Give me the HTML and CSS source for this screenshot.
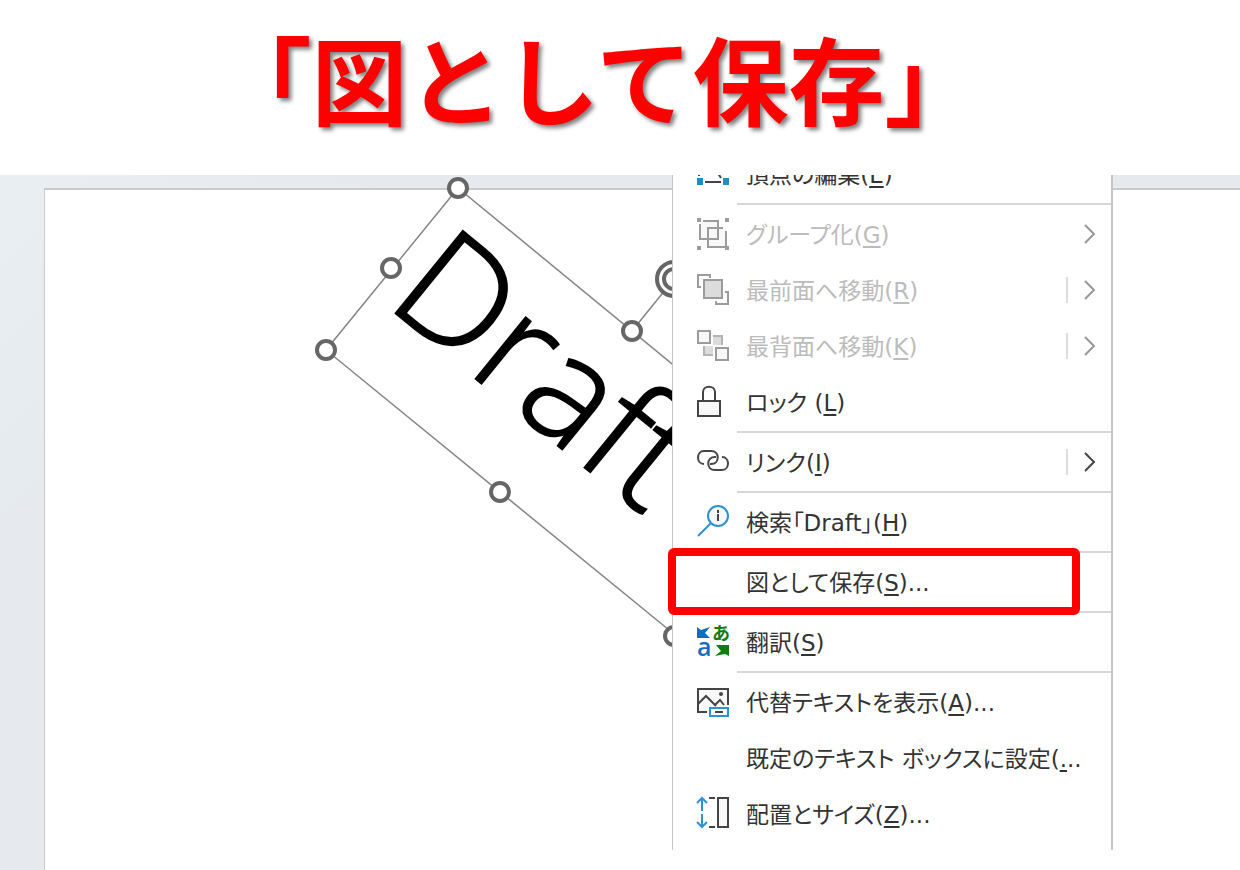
FILE: index.html
```
<!DOCTYPE html>
<html lang="ja">
<head>
    <meta charset="UTF-8">
    <meta name="viewport" content="width=device-width, initial-scale=1.0">
    <title>図として保存</title>
    <link rel="stylesheet" href="styles.css">
</head>
<body>

    <h1>「図として保存」</h1>

    <main class="canvas">
        <div class="page"></div>

        <!-- Selected text box -->
        <svg class="drawing" width="1240" height="695" viewBox="0 175 1240 695">
            <path class="frame" d="M458 188 L326 350 L674 634 L806 474 Z M632 331 L674 279"/>
            <text class="draft" transform="translate(384 304) rotate(39.2)">Draft</text>
            <g class="handle">
                <circle cx="458" cy="188" r="9"/>
                <circle cx="391" cy="268" r="9"/>
                <circle cx="326" cy="350" r="9"/>
                <circle cx="632" cy="331" r="9"/>
                <circle cx="500" cy="492" r="9"/>
                <circle cx="674" cy="636" r="9"/>
                <circle cx="674" cy="279" r="17"/>
                <circle cx="674" cy="279" r="10"/>
            </g>
        </svg>

        <div class="menu">
            <button type="button" class="item first">
                <svg class="icon" viewBox="0 0 32 32">
                    <path class="line" d="M2 18v-14H14L24 20M8 24H24"/>
                    <path class="blue-fill" d="M0 20h6v7H0zM26 20h6v7h-6z"/>
                </svg>
                <span class="label">頂点の編集(<u>E</u>)</span>
            </button>
            <hr>
            <button type="button" class="item" disabled>
                <svg class="icon" viewBox="0 0 32 32">
                    <path class="shade" d="M3 3h18v18H3zM11 10h18v19H11z"/>
                    <path class="line" d="M6 3H21V21H3V6M26 10H11V29H29V13"/>
                    <path class="dot" d="M0 0h4v4H0zM28 0h4v4h-4zM0 28h4v4H0zM28 28h4v4h-4z"/>
                </svg>
                <span class="label">グループ化(<u>G</u>)</span>
                <svg class="chevron" viewBox="0 0 12 20"><path d="M1 1L10 10L1 19"/></svg>
            </button>
            <button type="button" class="item" disabled>
                <svg class="icon" viewBox="0 0 32 32">
                    <path class="deep" d="M7 6h18v18H7z"/>
                    <path class="line" d="M7 6h18v18H7zM13 4V1H1V13H4M28 18h3V30H19V27"/>
                </svg>
                <span class="label">最前面へ移動(<u>R</u>)</span>
                <span class="split"></span>
                <svg class="chevron" viewBox="0 0 12 20"><path d="M1 1L10 10L1 19"/></svg>
            </button>
            <button type="button" class="item" disabled>
                <svg class="icon" viewBox="0 0 32 32">
                    <path class="deep" d="M16 6h9v9h-9zM7 16h9v9H7z"/>
                    <path class="thin" d="M16 6h9v9M7 16v9h9"/>
                    <path class="shade line" d="M1 1h12v12H1zM19 18h12v12H19z"/>
                </svg>
                <span class="label">最背面へ移動(<u>K</u>)</span>
                <span class="split"></span>
                <svg class="chevron" viewBox="0 0 12 20"><path d="M1 1L10 10L1 19"/></svg>
            </button>
            <button type="button" class="item">
                <svg class="icon" viewBox="0 0 32 32">
                    <path class="shade line" d="M1 15h22v15H1z"/>
                    <path class="line" d="M6 15V6C6 -1 18 -1 18 6V15"/>
                </svg>
                <span class="label">ロック (<u>L</u>)</span>
            </button>
            <hr>
            <button type="button" class="item">
                <svg class="icon" viewBox="0 0 32 32">
                    <path class="line" d="M7 18C-1 18 -1 5 7 5H14C23 5 23 18 14 18H13M25 11C33 11 33 24 25 24H18C9 24 9 11 18 11H19"/>
                </svg>
                <span class="label">リンク(<u>I</u>)</span>
                <span class="split"></span>
                <svg class="chevron" viewBox="0 0 12 20"><path d="M1 1L10 10L1 19"/></svg>
            </button>
            <hr>
            <button type="button" class="item">
                <svg class="icon" viewBox="0 0 32 32">
                    <circle class="shade blue" cx="21" cy="10" r="10"/>
                    <path class="blue" d="M1 30L14 17"/>
                    <path class="line" d="M21 4v3M21 8v7"/>
                </svg>
                <span class="label">検索「Draft」(<u>H</u>)</span>
            </button>
            <hr>
            <button type="button" class="item">
                <span class="icon"></span>
                <span class="label">図として保存(<u>S</u>)...</span>
            </button>
            <hr>
            <button type="button" class="item">
                <svg class="icon" viewBox="0 0 32 32">
                    <path class="navy-fill" d="M0 1L4 4L13 1L8 7L13 12H0Z"/>
                    <path class="green-fill" d="M32 30L28 28L18 30L24 25L19 19H32Z"/>
                    <text class="latin" x="0" y="30">a</text>
                    <text class="kana" x="15" y="14">あ</text>
                </svg>
                <span class="label">翻訳(<u>S</u>)</span>
            </button>
            <hr>
            <button type="button" class="item">
                <svg class="icon" viewBox="0 0 32 32">
                    <path class="shade" d="M1 3h30v23H1z"/>
                    <path class="line" d="M10 26H1V3H31V19M1 18L9 10L19 20M18 19L23 14L27 19"/>
                    <circle class="dot" cx="24" cy="8" r="2"/>
                    <path class="blue white-fill" d="M13 22h18v8H13z"/>
                    <path class="line" d="M18 26h8"/>
                </svg>
                <span class="label">代替テキストを表示(<u>A</u>)...</span>
            </button>
            <button type="button" class="item">
                <span class="icon"></span>
                <span class="label">既定のテキスト ボックスに設定(<u>.</u>..</span>
            </button>
            <button type="button" class="item">
                <svg class="icon" viewBox="0 0 32 32">
                    <path class="blue" d="M5 13V0M0 5L5 0L10 5M5 16V29M0 24L5 29L10 24"/>
                    <path class="line" d="M12 0h6M12 29h6"/>
                    <path class="shade line" d="M21 0h10v29H21z"/>
                </svg>
                <span class="label">配置とサイズ(<u>Z</u>)...</span>
            </button>
        </div>

        <div class="highlight"></div>
    </main>

</body>
</html>
```
FILE: styles.css
```
* {
    box-sizing: border-box;
}
body {
    display: flex;
    flex-direction: column;
    min-height: 100vh;
    margin: 0;
    background-color: #fff;
    font-family: "DejaVu Sans", "Noto Sans CJK JP", sans-serif;
}
h1 {
    height: 175px;
    margin: 0;
    padding-right: 44px;
    color: #f00;
    font-family: "Noto Sans CJK JP", sans-serif;
    font-size: 96px;
    font-weight: bold;
    line-height: 154px;
    text-align: center;
    text-shadow: 3px 3px 4px rgba(0, 0, 0, 0.5);
    white-space: nowrap;
}
.canvas {
    position: relative;
    display: flex;
    flex: 1;
    padding: 13px 0 0 44px;
    background: linear-gradient(135deg, #e8eef2, #e6eaef 20%);
    overflow: hidden;
}
.page {
    flex: 1;
    background-color: #fff;
    border-top: 2px solid #c8cacd;
    border-left: 1px solid #c8cacd;
}

/* Text box */
.drawing {
    position: absolute;
    top: 0;
    left: 0;
}
.frame {
    fill: none;
    stroke: #858585;
    stroke-width: 1.5;
}
.draft {
    font-family: "Open Sans", sans-serif;
    font-size: 149px;
    font-weight: 300;
    font-variant-ligatures: none;
    fill: #000;
    stroke: #000;
    stroke-width: 2;
}
.handle {
    fill: #fff;
    stroke: #666;
    stroke-width: 4;
}

/* Context menu */
.menu {
    position: absolute;
    top: 0;
    left: 672px;
    width: 441px;
    padding-bottom: 8px;
    background-color: #fff;
    border: solid #c6c6c6;
    border-width: 0 2px 0 1px;
    overflow: hidden;
}
.item {
    display: flex;
    align-items: center;
    width: 100%;
    height: 56px;
    padding: 0 15px 0 24px;
    background: none;
    border: none;
    color: #333;
    font-family: inherit;
    font-size: 23px;
    line-height: 32px;
    text-align: left;
}
.first {
    margin-top: -29px;
}
.item:disabled {
    color: #bcbcbc;
}
.label {
    flex: 1;
    padding: 2px 0 0 17px;
    font-feature-settings: "palt";
    white-space: nowrap;
}
.label u {
    text-decoration-thickness: 2px;
    text-underline-offset: 3px;
}
.split {
    width: 2px;
    height: 26px;
    margin-right: 16px;
    background-color: #ddd;
}
hr {
    height: 2px;
    margin: 1px 0 1px 64px;
    background-color: #d8d8d8;
    border: none;
}

/* Icons */
.icon {
    width: 32px;
    height: 32px;
    overflow: visible;
    fill: none;
    stroke-width: 2;
}
.shade {
    fill: #f8f8f8;
}
.line {
    stroke: #444;
}
.blue {
    stroke: #2a93d5;
}
.dot {
    fill: #444;
}
.blue-fill {
    fill: #1e8bcd;
}
.navy-fill,
.latin {
    fill: #106ebe;
}
.green-fill,
.kana {
    fill: #107c10;
}
.white-fill {
    fill: #fff;
}
.latin {
    font-family: "Open Sans", sans-serif;
    font-size: 25px;
    font-weight: 600;
}
.kana {
    font-size: 18px;
    font-weight: bold;
}
.item:disabled .line {
    stroke: #9c9c9c;
}
.item:disabled .dot {
    fill: #9c9c9c;
}
.deep {
    fill: #dcdcdc;
}
.thin {
    stroke: #b4b4b4;
}
.chevron {
    width: 12px;
    height: 20px;
    fill: none;
    stroke: #444;
    stroke-width: 2;
}
.item:disabled .chevron {
    stroke: #999;
}

/* Red box around the save command */
.highlight {
    position: absolute;
    top: 373px;
    left: 668px;
    width: 412px;
    height: 67px;
    border: 8px solid #f00;
    border-radius: 6px;
}
```
